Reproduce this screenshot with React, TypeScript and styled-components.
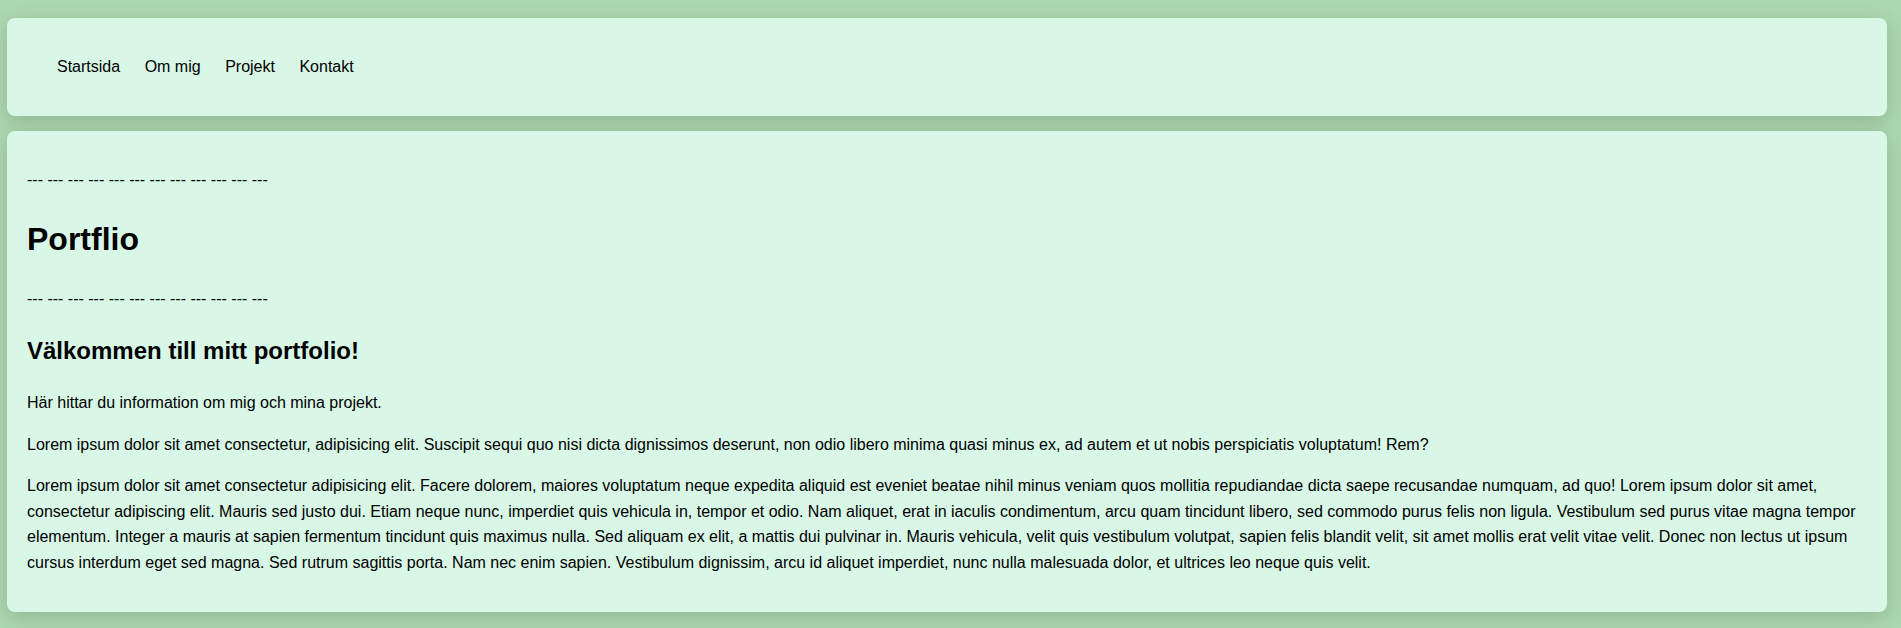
import React from "react";
import styled, { createGlobalStyle } from "styled-components";

const GlobalStyle = createGlobalStyle`
  html, body {
    margin: 0;
    padding: 0;
    background: #acd8b0;
  }
  body {
    font-family: "Liberation Sans", Arial, sans-serif;
    font-size: 16px;
    line-height: 1.6;
    color: #000;
  }
`;

const Page = styled.div`
  display: flex;
  flex-direction: column;
  gap: 15px;
  padding: 18px 14px 16px 7px;
`;

const Panel = styled.div`
  background: #d9f7e7;
  border-radius: 8px;
  box-shadow: 0 5px 20px rgba(0, 0, 0, 0.16);
`;

const Header = styled(Panel).attrs({ as: "header" })`
  padding: 20px 10px;
`;

const NavList = styled.ul`
  display: flex;
  gap: 24.5px;
  list-style: none;
  margin: 16px 0;
  padding: 0 0 0 40px;
`;

const NavItem = styled.li`
  a {
    color: #000;
    text-decoration: none;
  }
`;

const Main = styled(Panel).attrs({ as: "main" })`
  padding: 20px;
`;

const Divider = styled.p`
  margin: 16px 0;
`;

const Title = styled.h1`
  font-size: 32px;
  margin: 21.44px 0;
`;

const Subtitle = styled.h2`
  font-size: 24px;
  margin: 19.92px 0;
`;

const Text = styled.p`
  margin: 16px 0;
`;

const dashes = "--- --- --- --- --- --- --- --- --- --- --- ---";

export default function App() {
  return (
    <>
      <GlobalStyle />
      <Page>
        <Header>
          <nav>
            <NavList>
              <NavItem><a href="#">Startsida</a></NavItem>
              <NavItem><a href="#">Om mig</a></NavItem>
              <NavItem><a href="#">Projekt</a></NavItem>
              <NavItem><a href="#">Kontakt</a></NavItem>
            </NavList>
          </nav>
        </Header>
        <Main>
          <Divider>{dashes}</Divider>
          <Title>Portflio</Title>
          <Divider>{dashes}</Divider>
          <Subtitle>Välkommen till mitt portfolio!</Subtitle>
          <Text>Här hittar du information om mig och mina projekt.</Text>
          <Text>
            Lorem ipsum dolor sit amet consectetur, adipisicing elit. Suscipit sequi quo nisi dicta dignissimos deserunt, non odio libero minima quasi minus ex, ad autem et ut nobis perspiciatis voluptatum! Rem?
          </Text>
          <Text>
            Lorem ipsum dolor sit amet consectetur adipisicing elit. Facere dolorem, maiores voluptatum neque expedita aliquid est eveniet beatae nihil minus veniam quos mollitia repudiandae dicta saepe recusandae numquam, ad quo! Lorem ipsum dolor sit amet, consectetur adipiscing elit. Mauris sed justo dui. Etiam neque nunc, imperdiet quis vehicula in, tempor et odio. Nam aliquet, erat in iaculis condimentum, arcu quam tincidunt libero, sed commodo purus felis non ligula. Vestibulum sed purus vitae magna tempor elementum. Integer a mauris at sapien fermentum tincidunt quis maximus nulla. Sed aliquam ex elit, a mattis dui pulvinar in. Mauris vehicula, velit quis vestibulum volutpat, sapien felis blandit velit, sit amet mollis erat velit vitae velit. Donec non lectus ut ipsum cursus interdum eget sed magna. Sed rutrum sagittis porta. Nam nec enim sapien. Vestibulum dignissim, arcu id aliquet imperdiet, nunc nulla malesuada dolor, et ultrices leo neque quis velit.
          </Text>
        </Main>
      </Page>
    </>
  );
}
